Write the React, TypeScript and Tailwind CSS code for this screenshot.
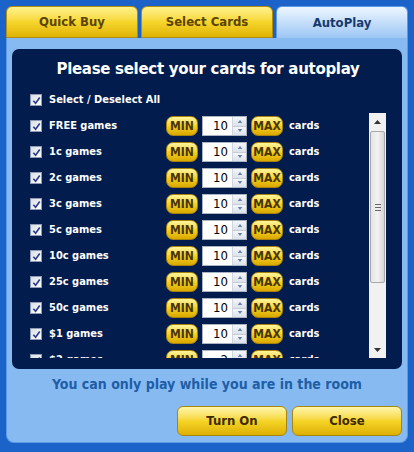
import { useState } from "react";

type Row = { label: string; count: number };

const rows: Row[] = [
  { label: "FREE games", count: 10 },
  { label: "1c games", count: 10 },
  { label: "2c games", count: 10 },
  { label: "3c games", count: 10 },
  { label: "5c games", count: 10 },
  { label: "10c games", count: 10 },
  { label: "25c games", count: 10 },
  { label: "50c games", count: 10 },
  { label: "$1 games", count: 10 },
  { label: "$2 games", count: 2 },
];

function Check({ checked }: { checked: boolean }) {
  return (
    <div className="flex h-[12px] w-[12px] shrink-0 items-center justify-center border border-[#8f9bb3] bg-gradient-to-br from-[#d8dde6] to-[#ffffff]">
      {checked ? (
        <svg viewBox="0 0 10 10" className="h-[9px] w-[9px]">
          <path d="M1.5 5.2 L4 8 L8.6 1.6" fill="none" stroke="#2b3c8f" strokeWidth="1.8" />
        </svg>
      ) : null}
    </div>
  );
}

function YellowPill({ text }: { text: string }) {
  return (
    <div className="flex h-[20px] w-[32px] shrink-0 items-center justify-center rounded-[7px] border border-[#a8820a] bg-gradient-to-b from-[#fff59a] via-[#f5d21e] to-[#d9a800] font-['DejaVu_Sans_Condensed',sans-serif] text-[12px] font-bold text-[#4a3500]">
      {text}
    </div>
  );
}

function Spin({ value }: { value: number }) {
  return (
    <div className="flex h-[20px] w-[45px] shrink-0 border border-[#a9b3c2] bg-white">
      <div className="flex-1 pr-[4px] text-right text-[13px] leading-[18px] text-black">{value}</div>
      <div className="flex w-[14px] flex-col border-l border-[#d0d6de]">
        <div className="flex flex-1 items-center justify-center border-b border-[#c5ccd6] bg-gradient-to-b from-[#f4f6fa] to-[#dce2ea]">
          <svg viewBox="0 0 6 4" className="h-[3px] w-[6px]">
            <path d="M0 4 L3 0 L6 4 Z" fill="#6a7fa8" />
          </svg>
        </div>
        <div className="flex flex-1 items-center justify-center bg-gradient-to-b from-[#f4f6fa] to-[#dce2ea]">
          <svg viewBox="0 0 6 4" className="h-[3px] w-[6px]">
            <path d="M0 0 L3 4 L6 0 Z" fill="#6a7fa8" />
          </svg>
        </div>
      </div>
    </div>
  );
}

function Scrollbar() {
  return (
    <div className="flex h-[245px] w-[17px] shrink-0 flex-col bg-[#f1f1f1]">
      <div className="flex h-[18px] items-center justify-center">
        <svg viewBox="0 0 7 4" className="h-[4px] w-[7px]">
          <path d="M0 4 L3.5 0 L7 4 Z" fill="#333" />
        </svg>
      </div>
      <div className="mx-[1px] flex h-[152px] items-center justify-center rounded-[2px] border border-[#a8a8a8] bg-gradient-to-r from-[#e4e4e4] via-[#f2f2f2] to-[#d6d6d6]">
        <div className="flex flex-col gap-[2px]">
          <div className="h-[1px] w-[6px] bg-[#666]" />
          <div className="h-[1px] w-[6px] bg-[#666]" />
          <div className="h-[1px] w-[6px] bg-[#666]" />
        </div>
      </div>
      <div className="flex-1" />
      <div className="flex h-[16px] items-center justify-center">
        <svg viewBox="0 0 7 4" className="h-[4px] w-[7px]">
          <path d="M0 0 L3.5 4 L7 0 Z" fill="#333" />
        </svg>
      </div>
    </div>
  );
}

export default function App() {
  const [tab, setTab] = useState<number>(2);
  const tabs = ["Quick Buy", "Select Cards", "AutoPlay"];

  return (
    <div className="h-[452px] w-[414px] bg-[#1b63c9] px-[6px] pt-[6px] font-['DejaVu_Sans_Condensed','DejaVu_Sans',sans-serif]">
      <div className="flex h-[32px] gap-[3px]">
        {tabs.map((t, i) =>
          i === tab ? (
            <button
              key={t}
              onClick={() => setTab(i)}
              className="flex-1 rounded-t-[6px] border border-b-0 border-[#5b9be6] bg-gradient-to-b from-[#eef6ff] to-[#9cc6f4] text-[13px] font-bold text-[#173a6e]"
            >
              {t}
            </button>
          ) : (
            <button
              key={t}
              onClick={() => setTab(i)}
              className="flex-1 rounded-t-[6px] border border-[#b08c12] bg-gradient-to-b from-[#fff38a] via-[#f6d52a] to-[#e0b300] text-[13px] font-bold text-[#5a4400]"
            >
              {t}
            </button>
          )
        )}
      </div>

      <div className="flex h-[405px] flex-col rounded-b-[8px] border border-t-0 border-[#5b9be6] bg-[#88baf2] px-[5px] pt-[11px]">
        <div className="h-[320px] rounded-[7px] bg-[#021c4d] pl-[18px] pr-[16px]">
          <div className="pt-[10px] text-center font-['DejaVu_Sans',sans-serif] text-[15px] font-bold leading-[20px] tracking-[-0.3px] text-white">
            Please select your cards for autoplay
          </div>
          <div className="mt-[11px] flex h-[20px] items-center gap-[7px]">
            <Check checked />
            <span className="text-[11px] font-bold text-white">Select / Deselect All</span>
          </div>
          <div className="mt-[3px] flex">
            <div className="h-[245px] flex-1 overflow-hidden">
              {rows.map((r) => (
                <div key={r.label} className="flex h-[26px] items-center">
                  <Check checked />
                  <span className="ml-[7px] w-[117px] text-[11px] font-bold text-white">{r.label}</span>
                  <YellowPill text="MIN" />
                  <div className="ml-[4px]">
                    <Spin value={r.count} />
                  </div>
                  <div className="ml-[4px]">
                    <YellowPill text="MAX" />
                  </div>
                  <span className="ml-[6px] text-[11px] font-bold text-white">cards</span>
                </div>
              ))}
            </div>
            <Scrollbar />
          </div>
        </div>

        <div className="mt-[6px] text-center text-[14px] font-bold leading-[18px] text-[#1d5ea6]">
          You can only play while you are in the room
        </div>

        <div className="mt-[13px] flex justify-end gap-[5px]">
          <button className="h-[30px] w-[110px] rounded-[6px] border border-[#a8860c] bg-gradient-to-b from-[#fff7a8] via-[#f5d425] to-[#ddb000] text-[13px] font-bold text-[#3d2a00]">
            Turn On
          </button>
          <button className="h-[30px] w-[110px] rounded-[6px] border border-[#a8860c] bg-gradient-to-b from-[#fff7a8] via-[#f5d425] to-[#ddb000] text-[13px] font-bold text-[#3d2a00]">
            Close
          </button>
        </div>
      </div>
    </div>
  );
}
